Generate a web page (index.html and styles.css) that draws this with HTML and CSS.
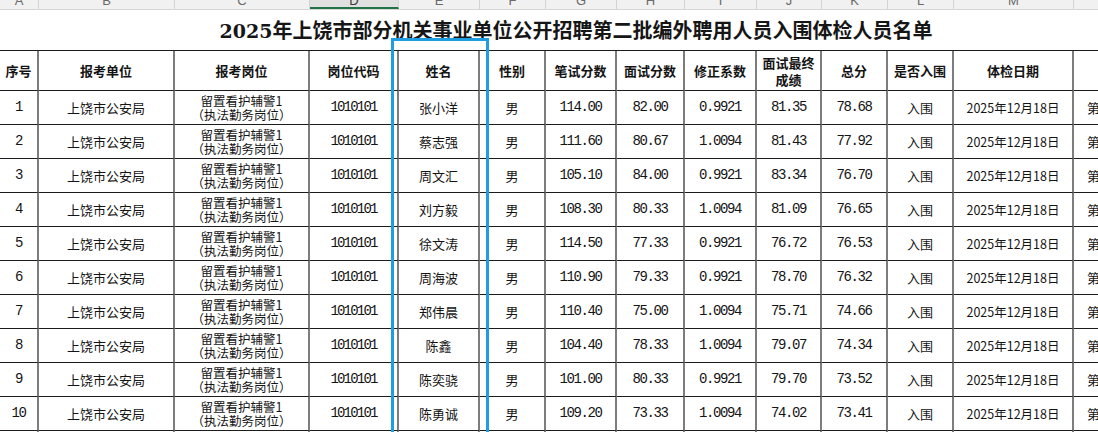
FILE: index.html
```html
<!DOCTYPE html>
<html lang="zh-CN">
<head>
<meta charset="utf-8">
<title>2025年上饶市部分机关事业单位公开招聘第二批编外聘用人员入围体检人员名单</title>
<link rel="stylesheet" href="styles.css">
</head>
<body>
<div class="sheet">
  <div class="colheads">
    <div class="ch">A</div><div class="ch">B</div><div class="ch">C</div><div class="ch active">D</div><div class="ch">E</div><div class="ch">F</div><div class="ch">G</div><div class="ch">H</div><div class="ch">I</div><div class="ch">J</div><div class="ch">K</div><div class="ch">L</div><div class="ch">M</div><div class="ch">N</div>
  </div>
  <div class="title"><span class="num">2025</span>年上饶市部分机关事业单位公开招聘第二批编外聘用人员入围体检人员名单</div>
  <div class="grid">
    <div class="c h">序号</div><div class="c h">报考单位</div><div class="c h">报考岗位</div><div class="c h">岗位代码</div><div class="c h">姓名</div><div class="c h">性别</div><div class="c h">笔试分数</div><div class="c h">面试分数</div><div class="c h">修正系数</div><div class="c h two"><span class="ln">面试最终</span><span class="ln">成绩</span></div><div class="c h">总分</div><div class="c h">是否入围</div><div class="c h">体检日期</div><div class="c h"></div>

    <div class="c m">1</div><div class="c">上饶市公安局</div><div class="c post"><span class="ln">留置看护辅警1</span><span class="ln">（执法勤务岗位）</span></div><div class="c code">1010101</div><div class="c">张小洋</div><div class="c">男</div><div class="c m">114.00</div><div class="c m">82.00</div><div class="c m">0.9921</div><div class="c m">81.35</div><div class="c m">78.68</div><div class="c">入围</div><div class="c date">2025年12月18日</div><div class="c last">第一批次</div>

    <div class="c m">2</div><div class="c">上饶市公安局</div><div class="c post"><span class="ln">留置看护辅警1</span><span class="ln">（执法勤务岗位）</span></div><div class="c code">1010101</div><div class="c">蔡志强</div><div class="c">男</div><div class="c m">111.60</div><div class="c m">80.67</div><div class="c m">1.0094</div><div class="c m">81.43</div><div class="c m">77.92</div><div class="c">入围</div><div class="c date">2025年12月18日</div><div class="c last">第一批次</div>

    <div class="c m">3</div><div class="c">上饶市公安局</div><div class="c post"><span class="ln">留置看护辅警1</span><span class="ln">（执法勤务岗位）</span></div><div class="c code">1010101</div><div class="c">周文汇</div><div class="c">男</div><div class="c m">105.10</div><div class="c m">84.00</div><div class="c m">0.9921</div><div class="c m">83.34</div><div class="c m">76.70</div><div class="c">入围</div><div class="c date">2025年12月18日</div><div class="c last">第一批次</div>

    <div class="c m">4</div><div class="c">上饶市公安局</div><div class="c post"><span class="ln">留置看护辅警1</span><span class="ln">（执法勤务岗位）</span></div><div class="c code">1010101</div><div class="c">刘方毅</div><div class="c">男</div><div class="c m">108.30</div><div class="c m">80.33</div><div class="c m">1.0094</div><div class="c m">81.09</div><div class="c m">76.65</div><div class="c">入围</div><div class="c date">2025年12月18日</div><div class="c last">第一批次</div>

    <div class="c m">5</div><div class="c">上饶市公安局</div><div class="c post"><span class="ln">留置看护辅警1</span><span class="ln">（执法勤务岗位）</span></div><div class="c code">1010101</div><div class="c">徐文涛</div><div class="c">男</div><div class="c m">114.50</div><div class="c m">77.33</div><div class="c m">0.9921</div><div class="c m">76.72</div><div class="c m">76.53</div><div class="c">入围</div><div class="c date">2025年12月18日</div><div class="c last">第一批次</div>

    <div class="c m">6</div><div class="c">上饶市公安局</div><div class="c post"><span class="ln">留置看护辅警1</span><span class="ln">（执法勤务岗位）</span></div><div class="c code">1010101</div><div class="c">周海波</div><div class="c">男</div><div class="c m">110.90</div><div class="c m">79.33</div><div class="c m">0.9921</div><div class="c m">78.70</div><div class="c m">76.32</div><div class="c">入围</div><div class="c date">2025年12月18日</div><div class="c last">第一批次</div>

    <div class="c m">7</div><div class="c">上饶市公安局</div><div class="c post"><span class="ln">留置看护辅警1</span><span class="ln">（执法勤务岗位）</span></div><div class="c code">1010101</div><div class="c">郑伟晨</div><div class="c">男</div><div class="c m">110.40</div><div class="c m">75.00</div><div class="c m">1.0094</div><div class="c m">75.71</div><div class="c m">74.66</div><div class="c">入围</div><div class="c date">2025年12月18日</div><div class="c last">第一批次</div>

    <div class="c m">8</div><div class="c">上饶市公安局</div><div class="c post"><span class="ln">留置看护辅警1</span><span class="ln">（执法勤务岗位）</span></div><div class="c code">1010101</div><div class="c">陈鑫</div><div class="c">男</div><div class="c m">104.40</div><div class="c m">78.33</div><div class="c m">1.0094</div><div class="c m">79.07</div><div class="c m">74.34</div><div class="c">入围</div><div class="c date">2025年12月18日</div><div class="c last">第一批次</div>

    <div class="c m">9</div><div class="c">上饶市公安局</div><div class="c post"><span class="ln">留置看护辅警1</span><span class="ln">（执法勤务岗位）</span></div><div class="c code">1010101</div><div class="c">陈奕骁</div><div class="c">男</div><div class="c m">101.00</div><div class="c m">80.33</div><div class="c m">0.9921</div><div class="c m">79.70</div><div class="c m">73.52</div><div class="c">入围</div><div class="c date">2025年12月18日</div><div class="c last">第一批次</div>

    <div class="c m">10</div><div class="c">上饶市公安局</div><div class="c post"><span class="ln">留置看护辅警1</span><span class="ln">（执法勤务岗位）</span></div><div class="c code">1010101</div><div class="c">陈勇诚</div><div class="c">男</div><div class="c m">109.20</div><div class="c m">73.33</div><div class="c m">1.0094</div><div class="c m">74.02</div><div class="c m">73.41</div><div class="c">入围</div><div class="c date">2025年12月18日</div><div class="c last">第一批次</div>

    <div class="c m"></div><div class="c"></div><div class="c"></div><div class="c"></div><div class="c"></div><div class="c"></div><div class="c"></div><div class="c"></div><div class="c"></div><div class="c"></div><div class="c"></div><div class="c"></div><div class="c"></div><div class="c last"></div>
  </div>
  <div class="select-box"></div>
</div>
</body>
</html>
```

FILE: styles.css
```css
html, body {
  margin: 0;
  padding: 0;
  background: #ffffff;
  overflow: hidden;
}

.sheet {
  position: relative;
  width: 1204px;
  height: 432px;
  overflow: hidden;
  font-family: "Noto Sans CJK SC", "Liberation Sans", sans-serif;
  color: #141414;
}

.colheads {
  display: grid;
  grid-template-columns: 39px 136px 135px 89px 81px 66px 71px 68px 72px 65px 66px 66px 120px 130px;
  height: 10px;
  background: #f1f1f1;
  border-bottom: 1px solid #d6d6d6;
  box-sizing: border-box;
  overflow: hidden;
}

.ch {
  display: flex;
  justify-content: center;
  align-items: flex-end;
  padding-bottom: 2px;
  border-right: 1px solid #d4d4d4;
  font-family: "Liberation Sans", sans-serif;
  font-size: 13px;
  line-height: 13px;
  color: #6a6a6a;
  overflow: hidden;
}

.ch.active {
  background: #e0e0e0;
  border-bottom: 2px solid #217346;
  padding-bottom: 0;
  color: #3a3a3a;
}

.title {
  height: 40px;
  width: 1152px;
  text-align: center;
  font-size: 20px;
  line-height: 40px;
  font-weight: 700;
  color: #161616;
  white-space: nowrap;
}

.title .num {
  font-family: "DejaVu Serif", "Liberation Serif", serif;
  font-size: 19px;
}

.grid {
  display: grid;
  grid-template-columns: 39px 136px 135px 89px 81px 66px 71px 68px 72px 65px 66px 66px 120px 130px;
  grid-auto-rows: 34px;
  grid-template-rows: 40px;
  border-top: 1px solid #1c1c1c;
}

.c {
  display: flex;
  flex-direction: column;
  align-items: center;
  justify-content: center;
  text-align: center;
  box-sizing: border-box;
  border-right: 2px solid #7d7d7d;
  border-bottom: 1px solid #1c1c1c;
  font-size: 13px;
  line-height: 15px;
  white-space: nowrap;
  overflow: hidden;
}

.ln {
  display: block;
}

.c.h {
  font-weight: 700;
  font-size: 13px;
}

.c.h.two {
  line-height: 17px;
}

.c.post {
  font-size: 12.5px;
  line-height: 14px;
}

.c.m {
  font-family: "Liberation Mono", monospace;
  font-size: 14px;
  letter-spacing: -1.4px;
}

.c.code {
  font-family: "Liberation Mono", monospace;
  font-size: 14px;
  letter-spacing: -1.8px;
}

.c.date {
  font-size: 12.5px;
}

.c.last {
  align-items: flex-start;
  padding-left: 13px;
  border-right: none;
}

.select-box {
  position: absolute;
  left: 391px;
  top: 38px;
  width: 98px;
  height: 420px;
  box-sizing: border-box;
  border: 3px solid #1f9de2;
  pointer-events: none;
}
```
